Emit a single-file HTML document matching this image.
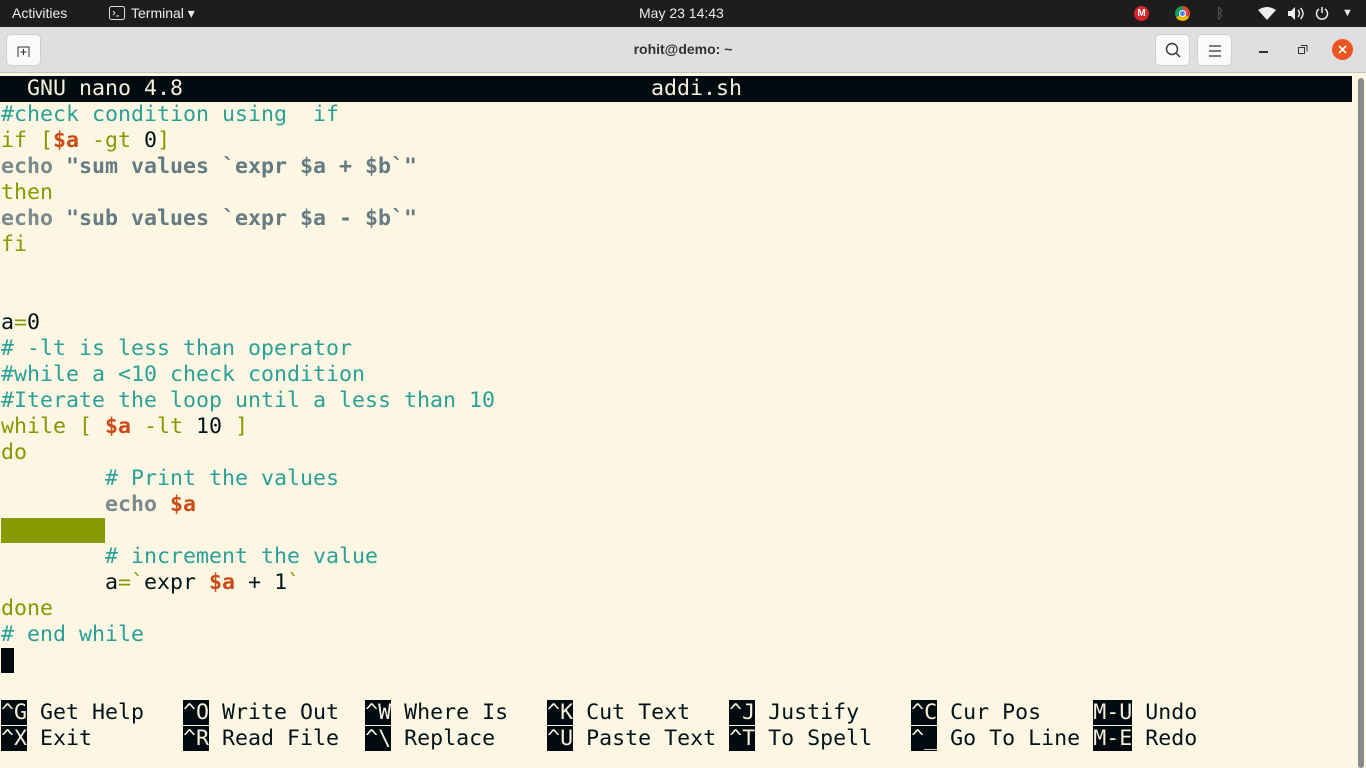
<!DOCTYPE html>
<html><head><meta charset="utf-8"><style>
*{margin:0;padding:0;box-sizing:border-box}
body{width:1366px;height:768px;overflow:hidden;background:#fdf6e3;font-family:"Liberation Sans",sans-serif;position:relative}
#top{position:absolute;left:0;top:0;width:1366px;height:27px;background:#1d1d1d;color:#ececec;font-size:14px}
#top span{position:absolute;top:5px}
#title{position:absolute;left:0;top:27px;width:1366px;height:46px;background:#dfdfdf;border-bottom:1px solid #c4c4c4}
.btn{position:absolute;top:7px;width:35px;height:32px;background:#fafafa;border:1px solid #cfcfcf;border-radius:5px}
#term{position:absolute;left:0;top:74px;width:1356px;height:694px;background:#fdf6e3}
#sb{position:absolute;left:1356px;top:74px;width:10px;height:694px;background:#fdf6e3}
#sb div{position:absolute;left:2px;top:4px;width:6px;height:690px;background:#8a8a8a;border-radius:3px}
pre{position:absolute;left:1px;top:76px;font-family:"DejaVu Sans Mono","Liberation Mono",monospace;font-size:21.6px;line-height:26px;color:#00141a;white-space:pre}
.c{color:#2aa198}.k{color:#859900}.v{color:#cb4b16;font-weight:bold}.s{color:#657b83;font-weight:bold}.e{color:#7b8a8d;font-weight:bold}
.hd{background:#020b10;color:#f5efdc;display:inline-block;width:1352px;margin-left:-1px;padding-left:1px}
.r{background:#020b10;color:#f5efdc}
.g{background:#869a00}
.cur{background:#020b10}
</style></head><body>
<div id="top">
<span style="left:12px">Activities</span>
<svg style="position:absolute;left:109px;top:6px" width="16" height="15"><rect x="0.5" y="0.5" width="15" height="13" rx="2" fill="none" stroke="#ddd"/><path d="M4 5l2 2-2 2M7 10h3" stroke="#ddd" fill="none"/></svg>
<span style="left:131px">Terminal ▾</span>
<span style="left:639px">May 23  14:43</span>
<div style="position:absolute;left:1134px;top:6px;width:15px;height:15px;border-radius:50%;background:#d9252a;color:#fff;font-size:10px;font-weight:bold;text-align:center;line-height:15px">M</div>
<div style="position:absolute;left:1175px;top:6px;width:15px;height:15px;border-radius:50%;background:conic-gradient(#db4437 0 33%,#f4b400 0 66%,#0f9d58 0);"><div style="margin:4px;width:7px;height:7px;border-radius:50%;background:#4285f4;border:1px solid #fff"></div></div>
<span style="left:1216px;color:#777">ᛒ</span>
<svg style="position:absolute;left:1258px;top:7px" width="18" height="13"><path d="M0 3Q9-3 18 3L9 13Z" fill="#eee"/></svg>
<svg style="position:absolute;left:1287px;top:6px" width="18" height="15"><path d="M1 5h3l4-4v13l-4-4H1z" fill="#eee"/><path d="M11 4q3 3.5 0 7M13.5 2q5 5.5 0 11" stroke="#eee" fill="none" stroke-width="1.4"/></svg>
<svg style="position:absolute;left:1315px;top:6px" width="14" height="14"><path d="M4 3A5.5 5.5 0 1 0 10 3M7 1v6" stroke="#eee" stroke-width="1.5" fill="none"/></svg>
<span style="left:1342px;font-size:11px;top:7px">▼</span>
</div>
<div id="title">
<div class="btn" style="left:6px"><svg width="35" height="32"><path d="M11 22V12h11v10M16.5 14v6M13.5 17h6" stroke="#333" fill="none"/></svg></div>
<div style="position:absolute;left:0;width:1366px;top:14px;text-align:center;font-size:14px;font-weight:bold;color:#333">rohit@demo: ~</div>
<div class="btn" style="left:1155px"><svg width="35" height="32"><circle cx="16" cy="14" r="5.5" stroke="#333" stroke-width="1.4" fill="none"/><path d="M20 18l4 4" stroke="#333" stroke-width="1.4"/></svg></div>
<div class="btn" style="left:1197px"><svg width="35" height="32"><path d="M11 11h12M11 16h12M11 21h12" stroke="#333" stroke-width="1.3"/></svg></div>
<div style="position:absolute;left:1259px;top:24px;width:9px;height:1.5px;background:#333"></div>
<svg style="position:absolute;left:1298px;top:18px" width="10" height="10"><rect x="0.5" y="2.5" width="6" height="6" fill="none" stroke="#333"/><path d="M3 0.5h6v6" fill="none" stroke="#333"/></svg>
<div style="position:absolute;left:1332px;top:12px;width:21px;height:21px;border-radius:50%;background:#e95420"><svg width="21" height="21"><path d="M7 7l7 7M14 7l-7 7" stroke="#fff" stroke-width="1.6"/></svg></div>
</div>
<div id="term"></div>
<div id="sb"><div></div></div>
<pre><span class="hd">  GNU nano 4.8                                    addi.sh                                              </span>
<span class="c">#check condition using  if</span>
<span class="k">if [</span><span class="v">$a</span><span class="k"> -gt </span>0<span class="k">]</span>
<span class="e">echo</span><span class="s"> "sum values `expr $a + $b`"</span>
<span class="k">then</span>
<span class="e">echo</span><span class="s"> "sub values `expr $a - $b`"</span>
<span class="k">fi</span>


a<span class="k">=</span>0
<span class="c"># -lt is less than operator</span>
<span class="c">#while a &lt;10 check condition</span>
<span class="c">#Iterate the loop until a less than 10</span>
<span class="k">while [ </span><span class="v">$a</span><span class="k"> -lt </span>10<span class="k"> ]</span>
<span class="k">do</span>
        <span class="c"># Print the values</span>
        <span class="e">echo </span><span class="v">$a</span>
<span class="g">        </span>
        <span class="c"># increment the value</span>
        a<span class="k">=`</span>expr <span class="v">$a</span> + 1<span class="k">`</span>
<span class="k">done</span>
<span class="c"># end while</span>
<span class="cur"> </span>

<span class="r">^G</span> Get Help   <span class="r">^O</span> Write Out  <span class="r">^W</span> Where Is   <span class="r">^K</span> Cut Text   <span class="r">^J</span> Justify    <span class="r">^C</span> Cur Pos    <span class="r">M-U</span> Undo
<span class="r">^X</span> Exit       <span class="r">^R</span> Read File  <span class="r">^\</span> Replace    <span class="r">^U</span> Paste Text <span class="r">^T</span> To Spell   <span class="r">^_</span> Go To Line <span class="r">M-E</span> Redo</pre>
</body></html>
